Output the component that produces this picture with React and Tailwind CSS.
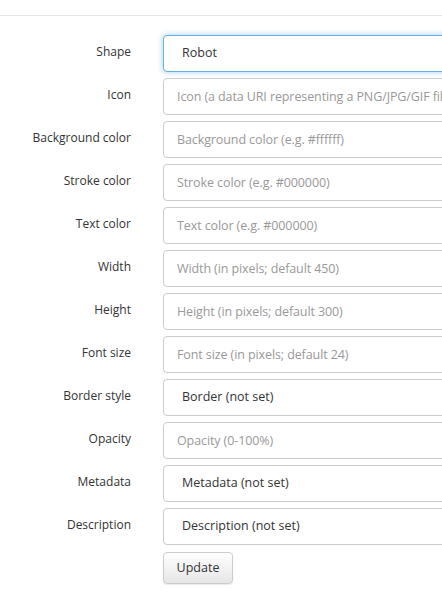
const rows = [
  { label: 'Shape', value: 'Robot', focus: true },
  { label: 'Icon', placeholder: 'Icon (a data URI representing a PNG/JPG/GIF file)' },
  { label: 'Background color', placeholder: 'Background color (e.g. #ffffff)' },
  { label: 'Stroke color', placeholder: 'Stroke color (e.g. #000000)' },
  { label: 'Text color', placeholder: 'Text color (e.g. #000000)' },
  { label: 'Width', placeholder: 'Width (in pixels; default 450)' },
  { label: 'Height', placeholder: 'Height (in pixels; default 300)' },
  { label: 'Font size', placeholder: 'Font size (in pixels; default 24)' },
  { label: 'Border style', value: 'Border (not set)' },
  { label: 'Opacity', placeholder: 'Opacity (0-100%)' },
  { label: 'Metadata', value: 'Metadata (not set)' },
  { label: 'Description', value: 'Description (not set)' },
];

function Field({ row }) {
  if (row.value) {
    return (
      <div
        className={
          'h-[37px] w-[300px] shrink-0 rounded-[4px] border bg-white pl-[18px] flex items-center text-[12.5px] text-[#333] whitespace-nowrap ' +
          (row.focus
            ? 'border-[#66afe9] shadow-[0_0_6px_rgba(102,175,233,0.6)]'
            : 'border-[#ccc]')
        }
      >
        {row.value}
      </div>
    );
  }
  return (
    <input
      readOnly
      placeholder={row.placeholder}
      className="h-[37px] w-[300px] shrink-0 rounded-[4px] border border-[#ccc] bg-white px-[13px] text-[12.5px] tracking-[-0.1px] text-[#333] placeholder:text-[#999] outline-none"
    />
  );
}

export default function App() {
  return (
    <div className="w-[442px] h-[592px] overflow-hidden bg-white font-['Open_Sans',sans-serif]">
      <div className="border-b border-[#e5e5e5] h-[16px]" />
      <div className="pt-[19px] flex flex-col gap-[6px]">
        {rows.map((row) => (
          <div key={row.label} className="flex items-start">
            <label className="w-[131px] shrink-0 text-right text-[12px] text-[#333] pt-[8px] whitespace-nowrap">
              {row.label}
            </label>
            <div className="ml-[32px]">
              <Field row={row} />
            </div>
          </div>
        ))}
        <div className="pl-[163px] pt-px">
          <button className="h-[32px] w-[70px] rounded-[4px] border border-[#ccc] bg-gradient-to-b from-white to-[#e6e6e6] text-[12.5px] text-[#333] shadow-[0_1px_1px_rgba(0,0,0,0.08)]">
            Update
          </button>
        </div>
      </div>
    </div>
  );
}
